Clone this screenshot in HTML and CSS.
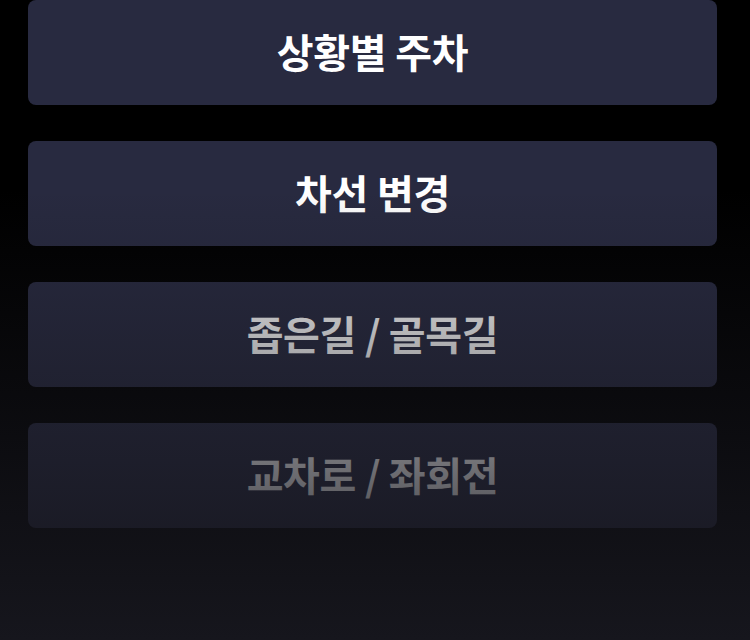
FILE: index.html
```html
<!DOCTYPE html>
<html>
  <head>
    <title>주행 연습</title>
    <link rel="stylesheet" href="styles.css">
  </head>

  <body>
    <div id="menu">
      <button class="course">상황별 주차</button>
      <button class="course">차선 변경</button>
      <button class="course">좁은길 / 골목길</button>
      <button class="course">교차로 / 좌회전</button>
    </div>
    <div id="fade"></div>
  </body>
</html>
```

FILE: styles.css
```css
body {
  margin: 0;
  height: 640px;
  overflow: hidden;
  background: #000;
  font-family: 'Noto Sans CJK KR', 'Noto Sans', sans-serif;
}

#menu {
  display: flex;
  flex-direction: column;
  gap: 36px;
  padding: 0 33px 0 28px;
}

.course {
  height: 105px;
  border: none;
  border-radius: 8px;
  background: #282a40;
  color: #fff;
  font-family: inherit;
  font-size: 40px;
  font-weight: 700;
  letter-spacing: -0.3px;
  padding: 0 0 4px;
}

/* the list fades out towards the bottom of the screen */
#fade {
  position: absolute;
  left: 0;
  top: 0;
  width: 100%;
  height: 640px;
  pointer-events: none;
  background: linear-gradient(
    to bottom,
    rgba(22, 22, 28, 0) 190px,
    rgba(22, 22, 29, 1) 640px
  );
}
```
